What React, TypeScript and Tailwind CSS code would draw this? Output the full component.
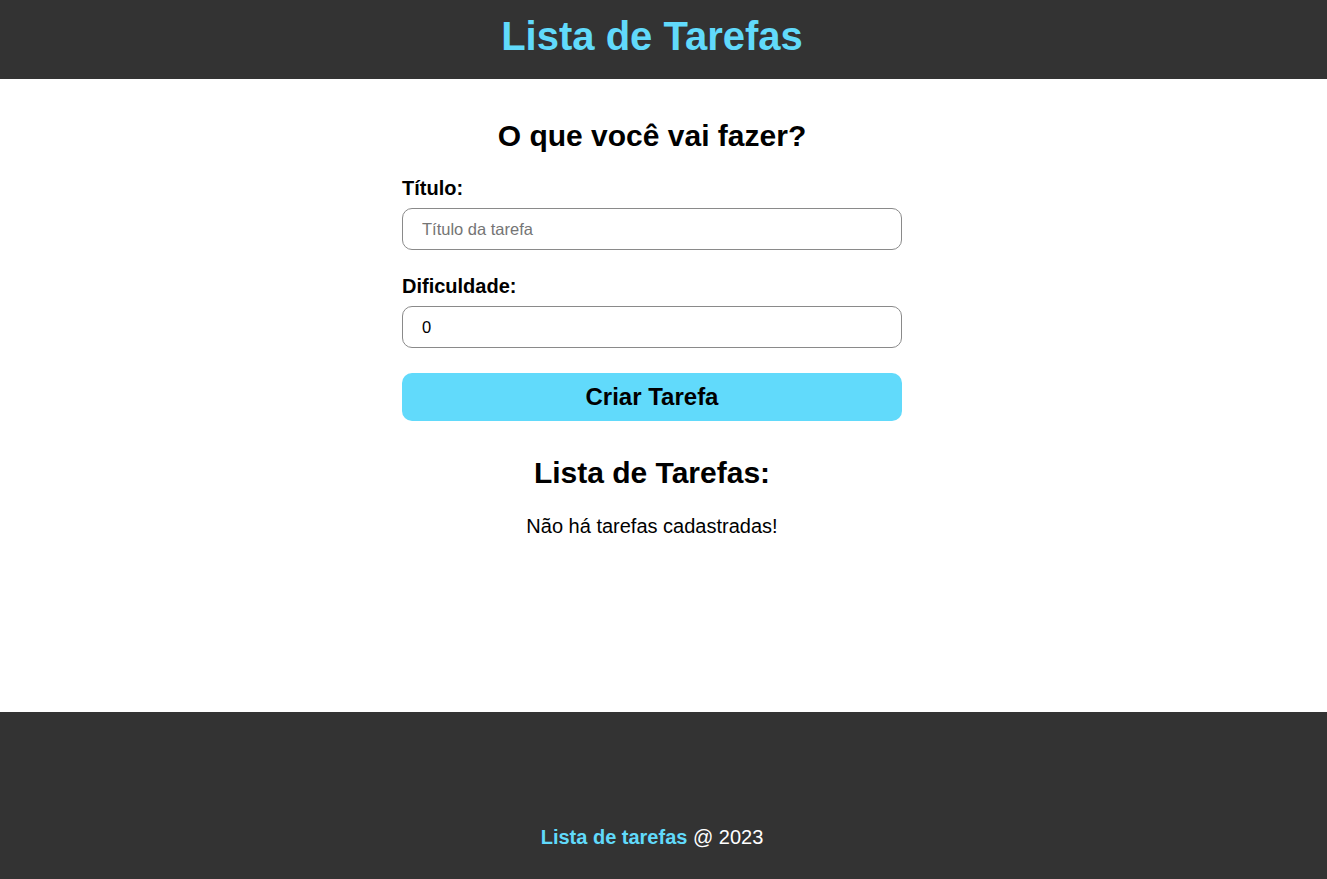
export default function App() {
  return (
    <div className="min-h-screen flex flex-col bg-white font-['Liberation_Sans',Arial,sans-serif]">
      {/* Header */}
      <header className="h-[79px] shrink-0 bg-[#333333]">
        <div className="w-[1304px] h-full flex items-center justify-center pb-[7px]">
          <h1 className="text-[40px] leading-[48px] font-bold text-[#61dafb]">Lista de Tarefas</h1>
        </div>
      </header>

      {/* Form + list */}
      <main className="h-[633px] shrink-0">
        <div className="w-[1304px]">
          <div className="w-[500px] mx-auto flex flex-col">
            <h2 className="mt-[39px] text-[30px] leading-[36px] font-bold text-black text-center">
              O que você vai fazer?
            </h2>

            <label className="mt-[23px] text-[20px] leading-[22px] font-bold text-black">Título:</label>
            <input
              type="text"
              placeholder="Título da tarefa"
              className="mt-[9px] h-[42px] w-full rounded-[10px] border border-[#8a8a8a] px-[19px] text-[16.5px] text-black placeholder:text-[#757575] outline-none"
            />

            <label className="mt-[25px] text-[20px] leading-[22px] font-bold text-black">Dificuldade:</label>
            <input
              type="text"
              defaultValue="0"
              className="mt-[9px] h-[42px] w-full rounded-[10px] border border-[#8a8a8a] px-[19px] text-[16.5px] text-black outline-none"
            />

            <button className="mt-[25px] h-[48px] w-full rounded-[10px] bg-[#61dafb] text-[24px] font-bold text-black">
              Criar Tarefa
            </button>

            <h2 className="mt-[34px] text-[30px] leading-[36px] font-bold text-black text-center">
              Lista de Tarefas:
            </h2>
            <p className="mt-[23px] text-[20px] leading-[24px] text-black text-center">Não há tarefas cadastradas!</p>
          </div>
        </div>
      </main>

      {/* Footer */}
      <footer className="h-[167px] shrink-0 bg-[#333333]">
        <div className="w-[1304px] h-full flex items-end justify-center pb-[30px]">
          <p className="text-[20px] leading-[24px] text-white">
            <span className="font-bold text-[#61dafb]">Lista de tarefas</span> @ 2023
          </p>
        </div>
      </footer>
    </div>
  );
}
